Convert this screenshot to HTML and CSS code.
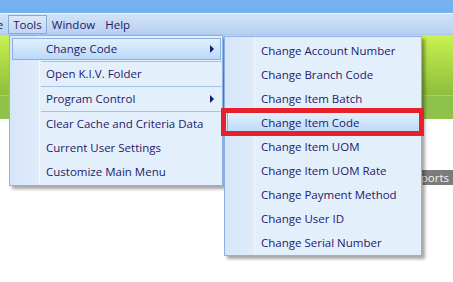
FILE: index.html
```html
<!DOCTYPE html>
<html>
<head>
<title>Tools menu</title>
<meta charset="utf-8"/>
<link rel="stylesheet" href="styles.css">
</head>
<body>
<div class="page">
<div class="titlebar"></div>
<div class="menubar">
<span class="mb-item file">File</span>
<span class="mb-item open">Tools</span>
<span class="mb-item">Window</span>
<span class="mb-item">Help</span>
</div>
<div class="workspace">
<div class="banner"></div>
<div class="banner-strip"></div>
<div class="tabs">
<span class="tab">Reports</span>
</div>
</div>

<div class="menu tools-menu">
<div class="item active has-sub">Change Code</div>
<div class="sep"></div>
<div class="item">Open K.I.V. Folder</div>
<div class="sep"></div>
<div class="item has-sub">Program Control</div>
<div class="sep"></div>
<div class="item">Clear Cache and Criteria Data</div>
<div class="item">Current User Settings</div>
<div class="item">Customize Main Menu</div>
</div>

<div class="menu sub-menu">
<div class="item">Change Account Number</div>
<div class="item">Change Branch Code</div>
<div class="item">Change Item Batch</div>
<div class="item active marked">Change Item Code</div>
<div class="item">Change Item UOM</div>
<div class="item">Change Item UOM Rate</div>
<div class="item">Change Payment Method</div>
<div class="item">Change User ID</div>
<div class="item">Change Serial Number</div>
</div>
</div>
</body>
</html>
```

FILE: styles.css
```css
body {
margin: 0;
background-color: white;
overflow: hidden;
}
* {
font-family: 'Open Sans', 'Noto Sans', sans-serif;
box-sizing: border-box;
}
.page {
position: relative;
width: 453px;
height: 282px;
overflow: hidden;
}
.titlebar {
height: 14px;
background-color: #74b1ee;
border-bottom: 1px solid #eef5fd;
}
.menubar {
display: flex;
align-items: center;
height: 21px;
background: linear-gradient(#d2e3f7, #b8d0f0);
border-bottom: 1px solid #a9c6ec;
}
.mb-item {
height: 19px;
padding: 0 4px;
border: 1px solid transparent;
font-size: 11.5px;
line-height: 17px;
color: #1d1a6b;
}
.mb-item.file {
margin-left: -20px;
}
.mb-item.open {
border-color: #86a9d6;
background: linear-gradient(#dbe8f8, #c2d7f2);
}
.workspace {
display: flex;
flex-direction: column;
}
.banner {
height: 60px;
background: linear-gradient(#c8f150, #8dbe3c);
}
.banner-strip {
height: 24px;
background-color: #8fc24a;
border-top: 1px solid #a5d35c;
}
.tabs {
display: flex;
justify-content: flex-end;
padding-top: 51px;
}
.tab {
padding: 0 4px 0 6px;
background-color: #7c7c7c;
color: #f4f4f4;
font-size: 11.5px;
line-height: 15px;
}
.menu {
position: absolute;
display: flex;
flex-direction: column;
border: 1px solid #8db2e3;
padding: 1px 0;
background: linear-gradient(to right, #d6e6f9, #dfebfb 29px, #f3f8fe 29px, #f3f8fe 30px, #e4effc 30px);
box-shadow: 3px 3px 3px rgba(0, 0, 0, 0.35);
}
.tools-menu {
left: 9px;
top: 35px;
width: 214px;
}
.sub-menu {
left: 224px;
top: 36px;
width: 198px;
padding-top: 2px;
padding-bottom: 0;
}
.item {
position: relative;
height: 22px;
margin: 1px 1px 1px 2px;
padding-left: 33px;
border: 1px solid transparent;
font-size: 11.5px;
line-height: 19px;
color: #1d1a6b;
white-space: nowrap;
}
.item.active {
border-color: #8ab1e6;
background: linear-gradient(#e4f0fd, #b9d9fa);
}
.item.has-sub::before {
content: '';
position: absolute;
right: 6px;
top: 6px;
border-left: 4px solid #1d1a6b;
border-top: 4px solid transparent;
border-bottom: 4px solid transparent;
}
.sep {
height: 1px;
margin-left: 31px;
background-color: #a4c3ec;
}
.item.marked::after {
content: '';
position: absolute;
top: -5px;
bottom: -3px;
left: -7px;
right: -5px;
border: 5px solid #e8202a;
}
```
